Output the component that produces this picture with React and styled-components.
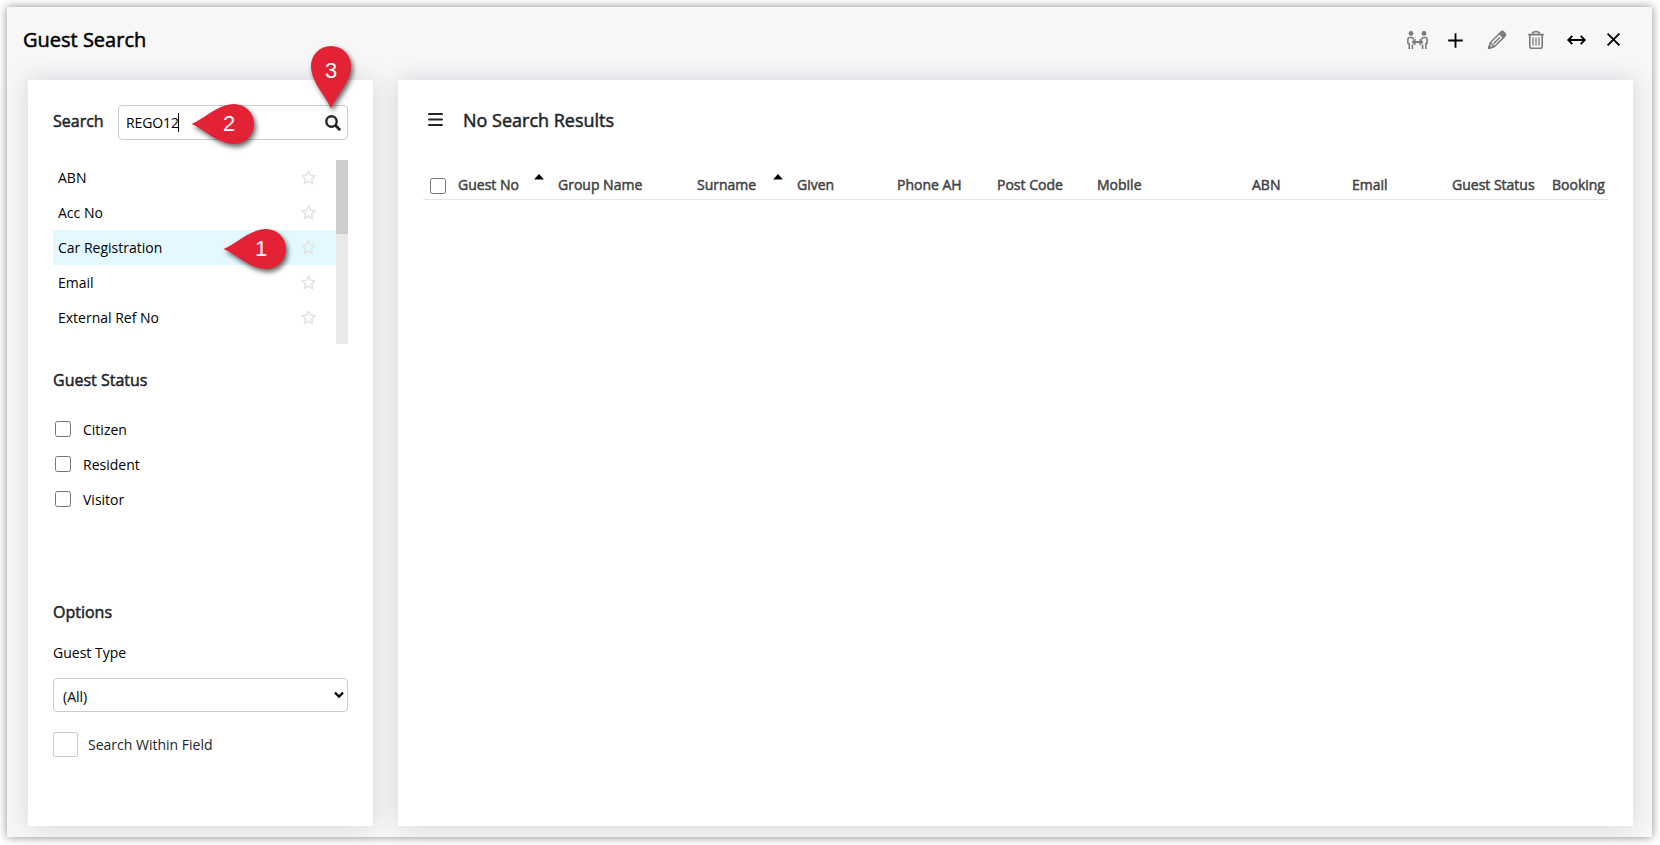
import React from "react";
import styled, { createGlobalStyle, css } from "styled-components";

const GlobalStyle = createGlobalStyle`
  *, *::before, *::after { box-sizing: border-box; }
  html, body { margin: 0; background: #fff; }
  body { font-family: "Open Sans", "Noto Sans", sans-serif; font-size: 14px; color: #000; overflow: hidden; }
`;

const emphasised = css`
  font-weight: 400;
  -webkit-text-stroke: 0.5px currentColor;
`;

const Page = styled.div`
  width: 1660px;
  height: 845px;
  padding: 7px 8px 8px 7px;
`;

const Dialog = styled.section`
  height: 830px;
  display: flex;
  flex-direction: column;
  background: #f7f7f7;
  box-shadow: 0 0 9px rgba(0, 0, 0, 0.45);
`;

const TitleBar = styled.header`
  height: 73px;
  flex: none;
  display: flex;
  justify-content: space-between;
  align-items: flex-start;
  padding: 19px 25px 0 16px;
`;

const Title = styled.h1`
  ${emphasised}
  margin: 0;
  font-size: 20px;
  line-height: 28px;
`;

const Toolbar = styled.div`
  display: flex;
  align-items: center;
  height: 28px;
`;

const ToolButton = styled.button`
  display: flex;
  align-items: center;
  justify-content: center;
  width: ${(p) => p.$width}px;
  height: 28px;
  padding: 0 0 ${(p) => p.$lift || 0}px;
  border: 0;
  background: none;
  color: ${(p) => (p.$disabled ? "#7c7c7c" : "#000")};

  svg { display: block; overflow: visible; }
`;

const Body = styled.div`
  flex: 1;
  display: flex;
  gap: 25px;
  padding: 0 19px 11px 21px;
`;

const Panel = styled.div`
  position: relative;
  background: #fff;
  box-shadow: 0 0 22px rgba(40, 45, 90, 0.16);
`;

const FilterPanel = styled(Panel)`
  width: 345px;
  flex: none;
  padding: 25px 25px 0;
`;

const ResultsPanel = styled(Panel)`
  flex: 1;
  padding: 25px 25px 0;
`;

const SearchRow = styled.div`
  display: flex;
  align-items: center;
  height: 35px;
`;

const SearchLabel = styled.label`
  ${emphasised}
  width: 65px;
  font-size: 16px;
  line-height: 24px;
  color: #212529;
  padding-bottom: 4px;
`;

const SearchBox = styled.div`
  flex: 1;
  display: flex;
  align-items: center;
  height: 35px;
  padding: 0 6px 0 7px;
  border: 1px solid #ccc;
  border-radius: 4px;
`;

const SearchText = styled.span`
  line-height: 19px;
  letter-spacing: -0.1px;
`;

const Caret = styled.span`
  width: 1px;
  height: 19px;
  margin-left: -0.5px;
  background: #000;
`;

const SearchIcon = styled.svg`
  display: block;
  margin: 1px 0 0 auto;
`;

const FieldListFrame = styled.div`
  display: flex;
  height: 184px;
  margin-top: 20px;
`;

const FieldList = styled.ul`
  flex: 1;
  margin: 0;
  padding: 0;
  list-style: none;
`;

const FieldItem = styled.li`
  display: flex;
  align-items: center;
  justify-content: space-between;
  height: 35px;
  padding: 0 20px 1px 5px;
  background: ${(p) => (p.$selected ? "#e3f9ff" : "transparent")};

  svg { display: block; }
`;

const ScrollTrack = styled.div`
  width: 12px;
  background: #e9e9e9;
`;

const ScrollThumb = styled.div`
  height: 74px;
  background: #cdcdcd;
`;

const Heading = styled.h2`
  ${emphasised}
  margin: ${(p) => p.$top}px 0 0;
  font-size: 16px;
  line-height: 24px;
  color: #212529;
`;

const CheckList = styled.div`
  margin-top: 19px;
  padding-left: 2px;
`;

const CheckRow = styled.label`
  display: flex;
  align-items: center;
  gap: 12px;
  height: 35px;
`;

const CheckBox = styled.span`
  flex: none;
  width: 16px;
  height: 16px;
  border: 1px solid #767676;
  border-radius: 2.5px;
  background: #fff;
`;

const CheckText = styled.span`
  padding-top: 2px;
`;

const FieldLabel = styled.div`
  margin-top: 19px;
  line-height: 20px;
`;

const SelectBox = styled.div`
  display: flex;
  align-items: center;
  justify-content: space-between;
  height: 34px;
  margin-top: 15px;
  padding: 0 3px 0 9px;
  border: 1px solid #ccc;
  border-radius: 4px;
  line-height: 20px;

  span { padding-top: 4px; }
`;

const WithinRow = styled.label`
  display: flex;
  align-items: center;
  gap: 10px;
  height: 25px;
  margin-top: 20px;
  color: #212529;
`;

const WithinBox = styled.span`
  width: 25px;
  height: 25px;
  border: 1px solid #ccc;
  border-radius: 2px;
`;

const ResultsTitleRow = styled.div`
  display: flex;
  align-items: center;
  height: 30px;
  padding-left: 5px;
  gap: 20px;
  color: #212529;
`;

const ResultsTitle = styled.h2`
  ${emphasised}
  margin: 0;
  font-size: 18px;
  line-height: 26px;
`;

const HeaderRow = styled.div`
  display: grid;
  grid-template-columns: 35px 100px 139px 100px 100px 100px 100px 155px 100px 100px 100px 56px;
  align-items: center;
  height: 30px;
  margin-top: 35px;
  border-bottom: 1px solid #e6e6e6;
  color: #444;
`;

const SelectAll = styled.div`
  padding: 3px 0 0 7px;
`;

const HeaderCell = styled.div`
  ${emphasised}
  display: flex;
  justify-content: space-between;
  padding-right: 14px;
  line-height: 20px;
  white-space: nowrap;
`;

const SortMark = styled.svg`
  display: block;
  margin-top: -1px;
`;

const Pin = styled.div`
  position: absolute;
  left: ${(p) => p.$x}px;
  top: ${(p) => p.$y}px;
  width: 40px;
  height: 40px;
  display: flex;
  align-items: center;
  justify-content: center;
  color: #fff;
  font-family: "Liberation Sans", Arial, sans-serif;
  font-size: 22px;
  line-height: 40px;

  svg {
    position: absolute;
    left: 0;
    top: 0;
    overflow: visible;
    filter: drop-shadow(2px 3px 2.5px rgba(0, 0, 0, 0.6));
  }
`;

const PinLabel = styled.span`
  position: relative;
  left: ${(p) => (p.$sideways ? -5 : 0)}px;
  top: ${(p) => (p.$sideways ? 0 : 5)}px;
`;

const fields = ["ABN", "Acc No", "Car Registration", "Email", "External Ref No"];
const columns = [
  "Guest No", "Group Name", "Surname", "Given", "Phone AH", "Post Code",
  "Mobile", "ABN", "Email", "Guest Status", "Booking",
];
const sorted = ["Guest No", "Surname"];

function Marker({ x, y, label, sideways }) {
  return (
    <Pin $x={x} $y={y}>
      <svg width="40" height="40" viewBox="-20 -20 40 40">
        <path
          transform={`rotate(${sideways ? 90 : 0})`}
          d="M0 42.5C-5 30-20 16-20 0A20 20 0 1 1 20 0C20 16 5 30 0 42.5Z"
          fill="#e32235"
        />
      </svg>
      <PinLabel $sideways={sideways}>{label}</PinLabel>
    </Pin>
  );
}

function Star() {
  return (
    <svg width="15" height="15" viewBox="0 0 15 15" fill="none" stroke="#e4e4e4" strokeWidth="1.6" strokeLinejoin="round">
      <path d="M7.5 1L9.4 5.2L14 5.7L10.6 8.9L11.5 13.6L7.5 11.3L3.5 13.6L4.4 8.9L1 5.7L5.6 5.2Z" />
    </svg>
  );
}

function MergeIcon() {
  const person = (
    <>
      <circle cx="4" cy="2.4" r="2.4" fill="currentColor" stroke="none" />
      <path d="M2.2 18V13L.9 12V8.3Q.9 6.5 2.8 6.5H4.6Q6.2 6.5 6.2 8.4M5.4 18V13.6" />
    </>
  );
  return (
    <svg width="21" height="18" viewBox="0 0 21 18" fill="none" stroke="currentColor" strokeWidth="1.6">
      {person}
      <g transform="translate(21 0) scale(-1 1)">{person}</g>
      <path d="M6 11H15M8.4 8.4L5.8 11L8.4 13.6M12.6 8.4L15.2 11L12.6 13.6" strokeWidth="1.8" />
    </svg>
  );
}

function PlusIcon() {
  return (
    <svg width="15" height="15" viewBox="0 0 15 15" stroke="currentColor" strokeWidth="1.8">
      <path d="M7.5 .2V14.8M.2 7.5H14.8" />
    </svg>
  );
}

function PencilIcon() {
  return (
    <svg width="18" height="18" viewBox="0 0 18 18" fill="none" stroke="currentColor" strokeWidth="1.5" strokeLinejoin="round">
      <path d="M11.4 2.5L2.2 11.7L.7 17.3L6.3 15.8L15.5 6.6M2.6 12L6 15.4M5.6 12.6L12 6.2" />
      <path d="M.7 17.3L1.4 14.7L3.3 16.6Z" fill="currentColor" />
      <path d="M11.4 2.6L13.1.9Q14.2-.1 15.4.9L17.1 2.6Q18.1 3.8 17.1 4.9L15.4 6.6Z" fill="currentColor" />
    </svg>
  );
}

function TrashIcon() {
  return (
    <svg width="16" height="18" viewBox="0 0 16 18" fill="none" stroke="currentColor" strokeWidth="1.6">
      <path d="M.2 3.6H15.8M4.4 3.2Q4.6.8 6.8.8H9.2Q11.4.8 11.6 3.2" />
      <path d="M1.8 3.8V15.2Q1.8 17.2 3.8 17.2H12.2Q14.2 17.2 14.2 15.2V3.8" />
      <path d="M5 6.5V14.5M8 6.5V14.5M11 6.5V14.5" strokeWidth="1.3" />
    </svg>
  );
}

function WidthIcon() {
  return (
    <svg width="19" height="10" viewBox="0 0 19 10" fill="none" stroke="currentColor" strokeWidth="1.8">
      <path d="M1.3 5H17.7M5.3 .9L1.2 5L5.3 9.1M13.7 .9L17.8 5L13.7 9.1" />
    </svg>
  );
}

function CloseIcon() {
  return (
    <svg width="13" height="13" viewBox="0 0 13 13" stroke="currentColor" strokeWidth="1.9">
      <path d="M.6 .6L12.4 12.4M12.4 .6L.6 12.4" />
    </svg>
  );
}

export default function App() {
  return (
    <Page>
      <GlobalStyle />
      <Dialog>
        <TitleBar>
          <Title>Guest Search</Title>
          <Toolbar>
            <ToolButton $width={37} $disabled><MergeIcon /></ToolButton>
            <ToolButton $width={39}><PlusIcon /></ToolButton>
            <ToolButton $width={43} $disabled><PencilIcon /></ToolButton>
            <ToolButton $width={35} $disabled><TrashIcon /></ToolButton>
            <ToolButton $width={47}><WidthIcon /></ToolButton>
            <ToolButton $width={27} $lift={1}><CloseIcon /></ToolButton>
          </Toolbar>
        </TitleBar>
        <Body>
          <FilterPanel>
            <SearchRow>
              <SearchLabel>Search</SearchLabel>
              <SearchBox>
                <SearchText>REGO12</SearchText>
                <Caret />
                <SearchIcon width="16" height="16" viewBox="0 0 16 16" fill="none" stroke="#212529" strokeWidth="2.4">
                  <circle cx="6.5" cy="6.5" r="5.2" />
                  <path d="M10.3 10.3L15.2 15.2" strokeWidth="2.8" />
                </SearchIcon>
              </SearchBox>
            </SearchRow>
            <FieldListFrame>
              <FieldList>
                {fields.map((name) => (
                  <FieldItem key={name} $selected={name === "Car Registration"}>
                    {name}
                    <Star />
                  </FieldItem>
                ))}
              </FieldList>
              <ScrollTrack><ScrollThumb /></ScrollTrack>
            </FieldListFrame>
            <Heading $top={24}>Guest Status</Heading>
            <CheckList>
              {["Citizen", "Resident", "Visitor"].map((name) => (
                <CheckRow key={name}>
                  <CheckBox />
                  <CheckText>{name}</CheckText>
                </CheckRow>
              ))}
            </CheckList>
            <Heading $top={84}>Options</Heading>
            <FieldLabel>Guest Type</FieldLabel>
            <SelectBox>
              <span>(All)</span>
              <svg width="10" height="8" viewBox="0 0 10 8" fill="none" stroke="#000" strokeWidth="2.2">
                <path d="M1 1.6L5 5.6L9 1.6" />
              </svg>
            </SelectBox>
            <WithinRow>
              <WithinBox />
              Search Within Field
            </WithinRow>
            <Marker x={283} y={-34} label="3" />
            <Marker x={186} y={24} label="2" sideways />
            <Marker x={218} y={149} label="1" sideways />
          </FilterPanel>
          <ResultsPanel>
            <ResultsTitleRow>
              <svg width="15" height="14" viewBox="0 0 15 14" stroke="#212529" strokeWidth="2" strokeLinecap="round">
                <path d="M1 1H14M1 6.5H14M1 12H14" />
              </svg>
              <ResultsTitle>No Search Results</ResultsTitle>
            </ResultsTitleRow>
            <HeaderRow>
              <SelectAll><CheckBox as="div" /></SelectAll>
              {columns.map((name) => (
                <HeaderCell key={name}>
                  {name}
                  {sorted.includes(name) && (
                    <SortMark width="10" height="6" viewBox="0 0 10 6">
                      <path d="M5 0L9.5 5V5.5H.5V5Z" fill="#000" />
                    </SortMark>
                  )}
                </HeaderCell>
              ))}
            </HeaderRow>
          </ResultsPanel>
        </Body>
      </Dialog>
    </Page>
  );
}
